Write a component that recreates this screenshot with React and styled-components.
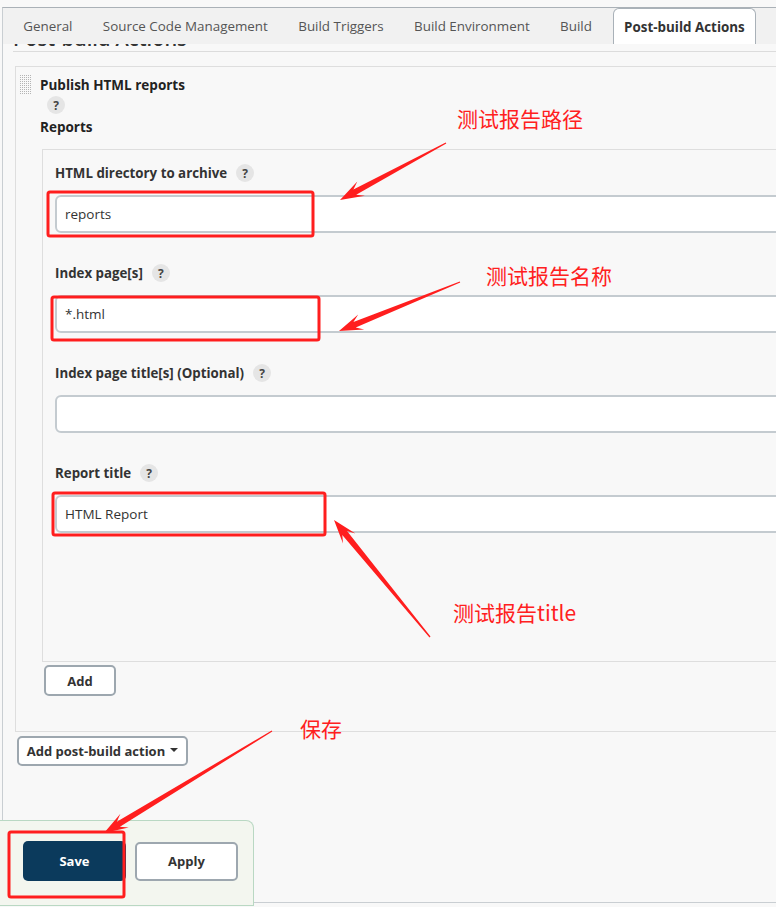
import React from 'react';
import styled, { createGlobalStyle } from 'styled-components';

const TABS = ['General', 'Source Code Management', 'Build Triggers', 'Build Environment', 'Build', 'Post-build Actions'];

const FIELDS = [
  { label: 'HTML directory to archive', value: 'reports' },
  { label: 'Index page[s]', value: '*.html' },
  { label: 'Index page title[s] (Optional)', value: '' },
  { label: 'Report title', value: 'HTML Report' },
];

const NOTES = [
  { text: '测试报告路径', x: 457, y: 106 },
  { text: '测试报告名称', x: 486, y: 263 },
  { text: '测试报告title', x: 453, y: 600 },
  { text: '保存', x: 300, y: 716 },
];

const BOXES = [
  { x: 48, y: 192, w: 265, h: 44 },
  { x: 52, y: 297, w: 267, h: 43 },
  { x: 53, y: 493, w: 272, h: 42 },
  { x: 9, y: 832, w: 115, h: 65 },
];

const ARROWS = [
  [446, 143, 340, 200],
  [460, 282, 339, 331],
  [430, 637, 334, 520],
  [272, 731, 104, 833],
];

// dots of the drag handle: 6 columns x 10 rows, 2px apart
const DOTS = [];
for (let r = 0; r < 10; r++) {
  for (let c = 0; c < 6; c++) DOTS.push([c * 2, r * 2]);
}

function arrowPoints([tx, ty, px, py]) {
  const dx = px - tx;
  const dy = py - ty;
  const len = Math.hypot(dx, dy);
  const ux = dx / len;
  const uy = dy / len;
  const nx = -uy;
  const ny = ux;
  const headLen = 24;
  const headW = 8;
  const neckW = 3;
  const tailW = 0.6;
  const hx = px - ux * headLen;
  const hy = py - uy * headLen;
  const kx = px - ux * headLen * 0.7;
  const ky = py - uy * headLen * 0.7;
  return [
    [tx + nx * tailW, ty + ny * tailW],
    [kx + nx * neckW, ky + ny * neckW],
    [hx + nx * headW, hy + ny * headW],
    [px, py],
    [hx - nx * headW, hy - ny * headW],
    [kx - nx * neckW, ky - ny * neckW],
    [tx - nx * tailW, ty - ny * tailW],
  ]
    .map(p => p.map(v => v.toFixed(1)).join(','))
    .join(' ');
}

export default function App() {
  return (
    <Page>
      <GlobalStyle />
      <Frame>
        <TabBar>
          {TABS.map(tab => (
            <Tab key={tab} $active={tab === 'Post-build Actions'}>
              {tab}
            </Tab>
          ))}
        </TabBar>
        <Content>
          <Heading>Post-build Actions</Heading>
          <Section>
            <SectionHead>
              <DragHandle width="12" height="20" viewBox="0 0 12 20">
                {DOTS.map(([x, y]) => (
                  <rect key={`${x}-${y}`} x={x} y={y} width="1" height="1" fill="#b4b4b4" />
                ))}
              </DragHandle>
              <HeadText>
                <SectionTitle>Publish HTML reports</SectionTitle>
                <Help>?</Help>
                <SectionTitle>Reports</SectionTitle>
              </HeadText>
            </SectionHead>
            <RepeatBox>
              {FIELDS.map(f => (
                <Field key={f.label}>
                  <LabelRow>
                    <Label>{f.label}</Label>
                    <Help>?</Help>
                  </LabelRow>
                  <Input defaultValue={f.value} />
                </Field>
              ))}
            </RepeatBox>
            <Button $w={72} $h={31}>Add</Button>
          </Section>
          <Button $w={171} $h={30} $ml={4}>
            Add post-build action <Caret />
          </Button>
        </Content>
        <BottomBar>
          <SaveButton>Save</SaveButton>
          <Button $w={103} $h={39}>Apply</Button>
        </BottomBar>
      </Frame>

      <Overlay width="776" height="907" viewBox="0 0 776 907">
        {BOXES.map((b, i) => (
          <rect key={i} x={b.x} y={b.y} width={b.w} height={b.h} rx="2" fill="none" stroke="#ff1e1e" strokeWidth="3" />
        ))}
        {ARROWS.map((a, i) => (
          <polygon key={i} points={arrowPoints(a)} fill="#ff1e1e" />
        ))}
      </Overlay>
      {NOTES.map(n => (
        <Note key={n.text} $x={n.x} $y={n.y}>
          {n.text}
        </Note>
      ))}
    </Page>
  );
}

//#region styles
const GlobalStyle = createGlobalStyle`
  * { box-sizing: border-box; }
  body {
    margin: 0;
    background: #f8f8f8;
    font-family: "Open Sans", "Noto Sans", sans-serif;
    color: #333;
  }
`;

const Page = styled.div`
  position: relative;
  width: 776px;
  height: 907px;
  overflow: hidden;
  padding: 7px 0 0 2px;
`;

const Frame = styled.div`
  position: relative;
  width: 1000px;
  height: 896px;
  border-top: 1px solid #aab1b7;
  border-left: 1px solid #c9ced2;
  border-bottom: 1px solid #c9ced2;
`;

const TabBar = styled.div`
  position: relative;
  z-index: 2;
  display: flex;
  height: 36px;
  padding-left: 5px;
  background: #f1f1f1;
`;

const Tab = styled.div`
  display: flex;
  align-items: center;
  padding: 0 ${p => (p.$active ? '10px' : '15.2px')};
  margin-left: ${p => (p.$active ? '6px' : '0')};
  font-size: 13.4px;
  font-weight: ${p => (p.$active ? 700 : 400)};
  color: ${p => (p.$active ? '#333' : '#555')};
  background: ${p => (p.$active ? '#fff' : 'transparent')};
  border: ${p => (p.$active ? '1px solid #a9b1b8' : '0')};
  border-bottom: 0;
  border-radius: 6px 6px 0 0;
`;

const Content = styled.div`
  padding-left: 10px;
`;

const Heading = styled.h2`
  margin: -17px 0 0;
  height: 25px;
  font-size: 20px;
  line-height: 24px;
  font-weight: 600;
  color: #333;
  border-bottom: 1px solid #dcdcdc;
`;

const Section = styled.div`
  margin: 14px 0 0 2px;
  padding: 8px 0 35px 4px;
  border: 1px solid #dedede;
`;

const SectionHead = styled.div`
  display: flex;
  align-items: flex-start;
`;

const DragHandle = styled.svg`
  flex: none;
  margin-right: 8px;
`;

const HeadText = styled.div`
  display: flex;
  flex-direction: column;
  align-items: flex-start;
  gap: 1px;

  & > span:nth-child(2) {
    margin: 0 0 2px 7px;
  }
`;

const SectionTitle = styled.div`
  font-size: 13.5px;
  line-height: 20px;
  font-weight: 700;
  color: #222;
`;

const Help = styled.span`
  display: inline-flex;
  align-items: center;
  justify-content: center;
  width: 18px;
  height: 18px;
  border-radius: 50%;
  background: #e5e5e5;
  color: #444;
  font-size: 12px;
  font-weight: 700;
`;

const RepeatBox = styled.div`
  margin: 12px 0 0 22px;
  padding: 13px 0 128px 12px;
  border: 1px solid #dedede;
  border-right: 0;
`;

const Field = styled.div`
  & + & {
    margin-top: 30px;
  }
`;

const LabelRow = styled.div`
  display: flex;
  align-items: center;
  gap: 9px;
  height: 20px;
  margin-bottom: 12px;
`;

const Label = styled.label`
  font-size: 13.3px;
  font-weight: 700;
  color: #333;
`;

const Input = styled.input`
  display: block;
  width: 900px;
  height: 38px;
  padding: 0 8px;
  border: 2px solid #c4cbd0;
  border-radius: 6px;
  background: #fff;
  font-family: inherit;
  font-size: 13.5px;
  color: #333;
  outline: none;
`;

const Button = styled.button`
  display: inline-flex;
  align-items: center;
  justify-content: center;
  gap: 5px;
  width: ${p => p.$w}px;
  height: ${p => p.$h}px;
  margin: ${p => (p.$ml !== undefined ? `4px 0 0 ${p.$ml}px` : '3px 0 0 24px')};
  border: 2px solid #9da7af;
  border-radius: 5px;
  background: #fff;
  font-family: inherit;
  font-size: 13px;
  font-weight: 700;
  color: #333;
  padding: 0;
`;

const Caret = styled.span`
  width: 0;
  height: 0;
  border-left: 4px solid transparent;
  border-right: 4px solid transparent;
  border-top: 4px solid #333;
  margin-top: -3px;
`;

const BottomBar = styled.div`
  position: absolute;
  left: -3px;
  top: 812px;
  width: 254px;
  height: 86px;
  display: flex;
  align-items: center;
  gap: 9px;
  padding: 0 0 4px 23px;
  background: #f3f6ef;
  border: 1px solid #b9d8c3;
  border-left: 0;
  border-radius: 0 8px 0 0;

  & > button {
    margin: 0;
  }
`;

const SaveButton = styled.button`
  width: 103px;
  height: 40px;
  border: 0;
  border-radius: 5px;
  background: #0b3a5c;
  color: #fff;
  font-family: inherit;
  font-size: 13px;
  font-weight: 700;
`;

const Overlay = styled.svg`
  position: absolute;
  left: 0;
  top: 0;
  pointer-events: none;
`;

const Note = styled.span`
  position: absolute;
  left: ${p => p.$x}px;
  top: ${p => p.$y}px;
  font-family: "Noto Sans CJK SC", "Noto Sans", sans-serif;
  font-size: 21px;
  line-height: 24px;
  color: #ff2020;
  white-space: nowrap;
`;
//#endregion
